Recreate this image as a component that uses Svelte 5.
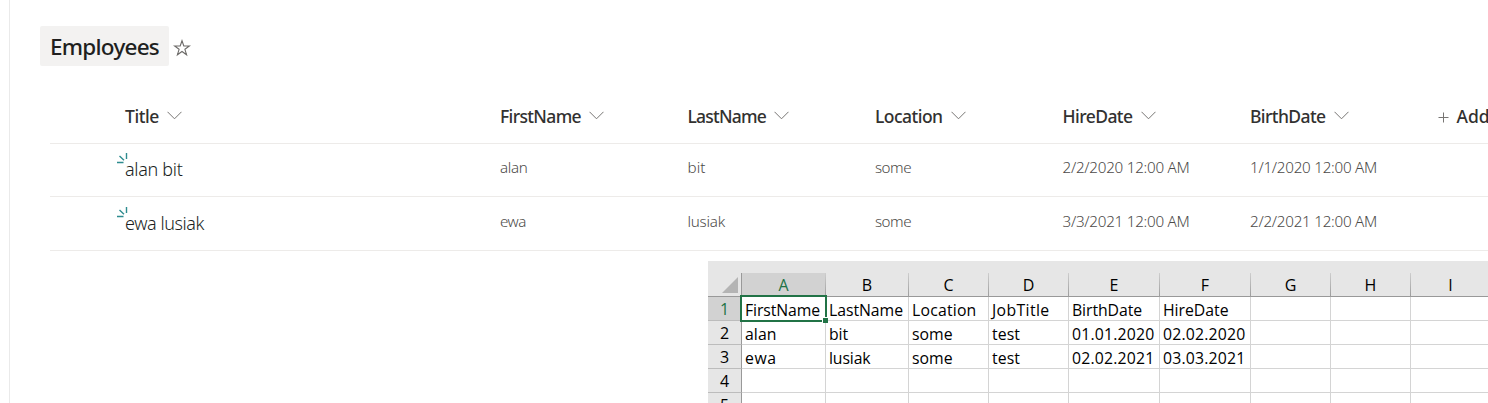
<script>
  const columns = [
    { name: 'Title', width: 34 },
    { name: 'FirstName', width: 81 },
    { name: 'LastName', width: 78.5 },
    { name: 'Location', width: 67.5 },
    { name: 'HireDate', width: 70 },
    { name: 'BirthDate', width: 75.5 },
  ];

  const items = [
    [['alan bit', 57.5], ['alan', 27.5], ['bit', 18], ['some', 36], ['2/2/2020 12:00 AM', 127], ['1/1/2020 12:00 AM', 127]],
    [['ewa lusiak', 79], ['ewa', 26], ['lusiak', 37.5], ['some', 36], ['3/3/2021 12:00 AM', 127], ['2/2/2021 12:00 AM', 127]],
  ];

  const letters = ['A', 'B', 'C', 'D', 'E', 'F', 'G', 'H', 'I'];
  const blank = ['', 0];
  const sheet = [
    [['FirstName', 75], ['LastName', 74], ['Location', 64.5], ['JobTitle', 57.5], ['BirthDate', 70], ['HireDate', 65.5], blank, blank, blank],
    [['alan', 31.5], ['bit', 19], ['some', 40.5], ['test', 28], ['01.01.2020', 82.5], ['02.02.2020', 82.5], blank, blank, blank],
    [['ewa', 31.5], ['lusiak', 41.5], ['some', 40.5], ['test', 28], ['02.02.2021', 82.5], ['03.03.2021', 82.5], blank, blank, blank],
    Array(9).fill(blank),
    Array(9).fill(blank),
  ];

  // Spreads the tracking of a label evenly so that it fills its width.
  function fit(node, width) {
    if (!width) return;
    const natural = node.getBoundingClientRect().width;
    node.style.letterSpacing = `${(width - natural) / node.textContent.length}px`;
  }
</script>

<div class="page">
  <main>
    <header>
      <h1><span use:fit={109}>Employees</span></h1>
      <svg class="star" width="18" height="18" viewBox="0 0 18 18">
        <path d="M9 1.8 10.8 7H16.4L11.9 10.3 13.6 15.8 9 12.5 4.4 15.8 6.1 10.3 1.6 7H7.2Z" />
      </svg>
    </header>

    <section class="list">
      <div class="row head">
        {#each columns as column}
          <div class="cell">
            <span use:fit={column.width}>{column.name}</span>
            <svg class="chevron" width="15" height="9" viewBox="0 0 15 9"><path d="M.5.8 7.5 7.8 14.5.8" /></svg>
          </div>
        {/each}
        <div class="cell add">
          <svg width="11" height="11" viewBox="0 0 11 11"><path d="M5.5.5V10.5M.5 5.5H10.5" /></svg>
          <span>Add column</span>
        </div>
      </div>
      {#each items as item}
        <div class="row item">
          {#each item as [text, width], i}
            <div class="cell" class:title={i === 0}>
              {#if i === 0}
                <svg class="fresh" width="11" height="11" viewBox="0 0 11 11">
                  <path d="M9.5 0V6M2.5 3 7 7.2M0 9.5H6.5" />
                </svg>
              {/if}
              <span use:fit={width}>{text}</span>
            </div>
          {/each}
        </div>
      {/each}
    </section>

    <section class="sheet">
      <div class="grid letters">
        <div class="corner"><svg width="16" height="16"><path d="M16 0V16H0Z" /></svg></div>
        {#each letters as letter, i}
          <div class="letter" class:active={i === 0}>{letter}</div>
        {/each}
      </div>
      {#each sheet as line, r}
        <div class="grid line">
          <div class="number" class:active={r === 0}>{r + 1}</div>
          {#each line as [text, width], c}
            <div class="value" class:selected={r === 0 && c === 0}>
              {#if text}<span use:fit={width}>{text}</span>{/if}
            </div>
          {/each}
        </div>
      {/each}
    </section>
  </main>
</div>

<style>
  :global(body) { background: #fff; overflow: hidden; }
  .page {
    box-sizing: border-box;
    width: 1488px;
    height: 403px;
    padding-left: 9px;
    overflow: hidden;
    font-family: "Noto Sans", "Open Sans", sans-serif;
    white-space: nowrap;
  }
  main {
    box-sizing: border-box;
    height: 403px;
    padding-top: 26px;
    border-left: 1px solid #eaeaea;
    overflow: hidden;
  }
  span { display: inline-block; }
  header { display: flex; align-items: center; gap: 4px; height: 40px; padding-left: 30px; }
  h1 {
    box-sizing: border-box;
    width: 129px;
    height: 40px;
    margin: 0;
    padding: 1px 0 0 10px;
    border-radius: 2px;
    background: #f3f2f1;
    color: #201f1e;
    font-size: 22.5px;
    font-weight: 500;
    line-height: 40px;
  }
  svg { display: block; flex: none; fill: none; }
  .star { margin-top: 3px; stroke: #6c6a68; stroke-width: 1.1; }

  .list { margin: 24px 0 0 40px; }
  .row {
    box-sizing: border-box;
    display: grid;
    grid-template-columns: 375px repeat(5, 187.5px) 200px;
    width: 1438px;
    padding-left: 75px;
    border-bottom: 1px solid #edebe9;
    overflow: hidden;
  }
  .cell { display: flex; align-items: center; }
  .head { height: 54px; color: #323130; font-size: 17.5px; font-weight: 500; }
  .head .cell { gap: 8px; }
  .head span { margin-top: -2px; }
  .head svg { stroke: #777573; stroke-width: 1; }
  .chevron { margin-top: -3px; }
  .add { color: #323130; }
  .add svg { margin-top: 1px; }
  .head .add { gap: 8px; }
  .item { height: 53px; color: #4c4a48; font-size: 15.2px; font-weight: 300; }
  .item + .item { height: 54px; }
  .item .cell { padding-bottom: 7px; }
  .item + .item .cell { padding-bottom: 6px; }
  .item .title { position: relative; padding-bottom: 2px; color: #201f1e; font-size: 18px; }
  .item + .item .title { padding-bottom: 2px; }
  .fresh { position: absolute; top: 9px; left: -8.5px; stroke: #2e8c8f; stroke-width: 1.4; }
  .item + .item .fresh { top: 10px; }

  .sheet { width: 780px; height: 142px; margin: 10px 0 0 698px; background: #e6e6e6; color: #000; overflow: hidden; }
  .grid { display: grid; grid-template-columns: 34px 84px 83px 80px 80px 91px 91px 80px 80px 80px; }
  .letters { box-sizing: border-box; height: 36px; padding-top: 12px; border-bottom: 1px solid #999; }
  .corner { display: flex; justify-content: flex-end; padding: 4px 3px 0 0; border-right: 1px solid #999; }
  .corner path { fill: #b4b4b4; }
  .letter, .number {
    box-sizing: border-box;
    font-family: "Open Sans", sans-serif;
    font-size: 16px;
    line-height: 24px;
    text-align: center;
  }
  .letter { border-right: 1px solid #b2b2b2; border-image: linear-gradient(#d0d0d0, #999) 1; }
  .letter.active { background: #d2d2d2; color: #217346; }
  .number { height: 24px; border-right: 1px solid #999; border-bottom: 1px solid #bcbcbc; }
  .number.active { background: #d2d2d2; color: #217346; }
  .line { height: 24px; }
  .value {
    box-sizing: border-box;
    height: 24px;
    padding-left: 3px;
    border-right: 1px solid #d4d4d4;
    border-bottom: 1px solid #d4d4d4;
    background: #fff;
    font-family: "Open Sans", sans-serif;
    font-size: 15.8px;
    line-height: 26px;
  }
  .selected { position: relative; }
  .selected::before {
    content: "";
    position: absolute;
    inset: -2px -2px -2px -2px;
    border: 2px solid #217346;
  }
  .selected::after {
    content: "";
    position: absolute;
    right: -3px;
    bottom: -3px;
    width: 5px;
    height: 5px;
    border: solid #fff;
    border-width: 1px 0 0 1px;
    background: #217346;
  }
</style>
